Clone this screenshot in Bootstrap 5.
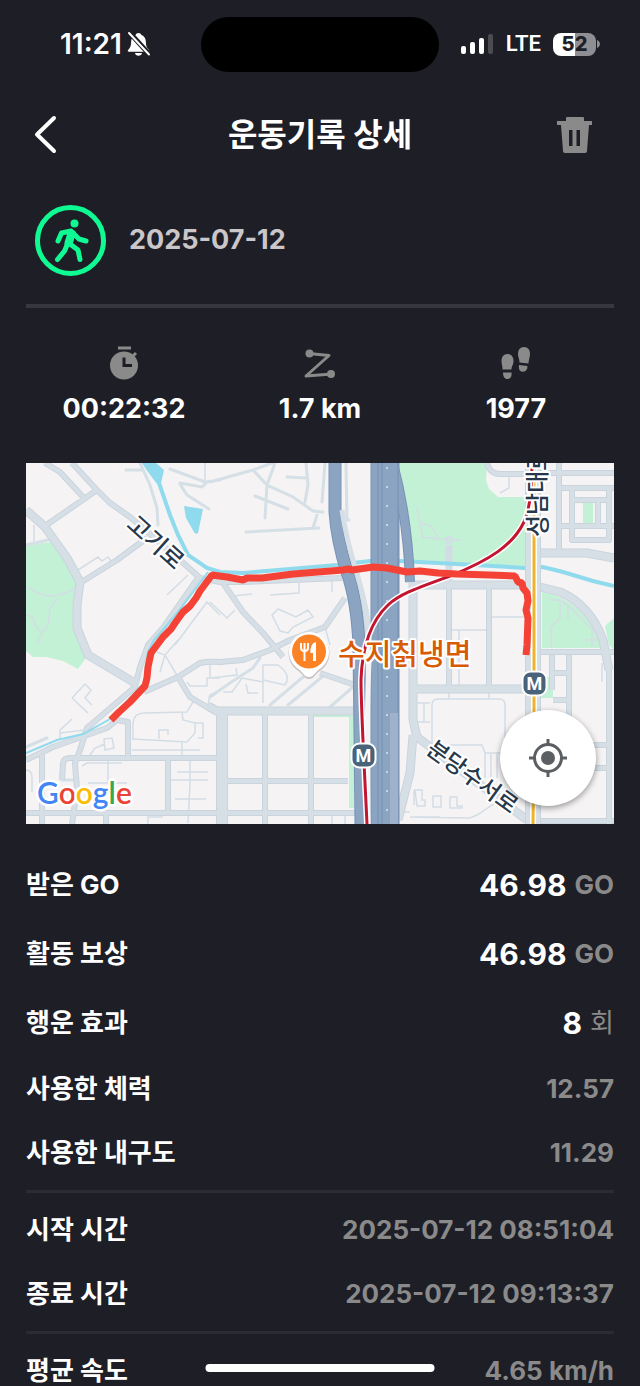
<!DOCTYPE html>
<html lang="ko">
<head>
<meta charset="utf-8">
<meta name="viewport" content="width=device-width, initial-scale=1">
<title>운동기록 상세</title>
<link href="https://cdn.jsdelivr.net/npm/bootstrap@5.3.0/dist/css/bootstrap.min.css" rel="stylesheet">
<style>
  :root { --ink: #1e1e26; --dim: #8a8a8a; --rule: #2b2b34; --side: 26px; }
  body { background: var(--ink); color: #fff; font-family: Inter, "Noto Sans CJK KR", sans-serif; font-weight: 700; }
  .statusbar { height: 88px; padding: 0 40px; }
  .island { width: 238px; height: 55px; border-radius: 28px; background: #000; }
  .clock { font-size: 28px; line-height: 32px; margin-left: 20px; font-weight: 600; }
  .network { font-family: Roboto, sans-serif; font-size: 22px; line-height: 32px; font-weight: 600; }
  .battery { width: 43px; height: 23px; border-radius: 8px; background: linear-gradient(90deg, #fff 52%, #8e8e93 52%); color: var(--ink); font-size: 20px; line-height: 23px; font-weight: 800; }
  .topbar { height: 94px; padding: 0 var(--side); }
  .topbar h1 { font-size: 32px; line-height: 44px; font-weight: 700; }
  .icon-btn { width: 40px; height: 44px; margin-right: 20px; }
  .content { padding: 0 var(--side); }
  .summary { height: 122px; padding: 0 9px 6px; gap: 23px; }
  .summary time { color: #cbc7c9; font-size: 27px; line-height: 36px; }
  .rule-line { height: 3px; margin: 5px 0; border: 0; opacity: 1; background: var(--rule); }
  .rule-top { height: 4px; margin: 0; background: #373740; }
  .stats { padding: 36px 0 36px; }
  .stats svg { color: var(--dim); height: 40px; }
  .stats .figure-text { font-size: 27px; line-height: 36px; margin-top: 7px; }
  .locate { right: 18px; bottom: 18px; width: 96px; height: 96px; background: #fff; color: #5b5f63; box-shadow: 0 2px 6px rgba(0,0,0,.4); }
  .details { margin: 26px 0 0; font-size: 26px; line-height: 36px; }
  .details .line { height: 64px; }
  .details .line-lg { height: 69px; }
  .details dt, .details dd { margin: 0; font-weight: 700; }
  .details dd { color: var(--dim); }
  .details dd.amount { gap: 8px; }
  .details dd strong { color: #fff; font-size: 30px; font-weight: 700; }
  .home-bar { bottom: 14px; width: 229px; height: 8px; border-radius: 4px; background: #fff; }
  .map-label { font-family: "Noto Sans CJK KR", sans-serif; font-weight: 500; fill: #26384a; stroke: #fff; stroke-width: 4px; stroke-linejoin: round; paint-order: stroke; }
  .map-place { fill: #d75b05; }
  .map-logo { font-family: Lato, sans-serif; font-size: 30px; font-weight: 600; stroke: #fff; stroke-width: 5px; stroke-linejoin: round; paint-order: stroke; }
  .map-metro { font-family: Roboto, sans-serif; font-size: 18px; font-weight: 700; fill: #fff; }
</style>
</head>
<body>
<div class="vh-100 overflow-hidden d-flex flex-column position-relative">

  <div class="statusbar d-flex align-items-center flex-shrink-0">
    <div class="d-flex align-items-center gap-1 flex-fill w-25">
      <span class="clock">11:21</span>
      <svg width="25" height="26" viewBox="0 0 25 26" aria-hidden="true">
        <path fill="#fff" d="M12.500 2c1.500 0 2.400.8 2.700 1.700 3.300 1.200 4.700 4 4.700 7.600 0 4 1.200 5.800 3 7.600.6.700.3 1.800-.8 1.800H2.900c-1.100 0-1.400-1.100-.8-1.800 1.800-1.800 3-3.600 3-7.600 0-3.600 1.400-6.400 4.700-7.600.3-.9 1.200-1.700 2.700-1.700zM9 22h7c-.3 1.700-1.700 2.800-3.500 2.800S9.300 23.700 9 22z"/>
        <path d="M3.500 1.500l20 22" stroke="#1e1e26" stroke-width="5"/>
        <path d="M3 2l20 21.500" stroke="#fff" stroke-width="2" stroke-linecap="round"/>
      </svg>
    </div>
    <div class="island flex-shrink-0"></div>
    <div class="d-flex align-items-center justify-content-end flex-fill w-25">
      <svg class="me-2 flex-shrink-0" width="34" height="20" viewBox="0 0 34 20" aria-hidden="true">
        <g fill="#fff"><rect x="1" y="12" width="5" height="8" rx="2"/><rect x="10" y="8" width="5" height="12" rx="2"/><rect x="19" y="4" width="5" height="16" rx="2"/></g>
        <rect x="28" y="0" width="5" height="20" rx="2" fill="#4b4b50"/>
      </svg>
      <span class="network me-2 ms-1">LTE</span>
      <span class="battery text-center flex-shrink-0 ms-1">52</span>
      <svg class="flex-shrink-0" width="4" height="8" viewBox="0 0 4 8" aria-hidden="true"><path d="M1 0c4 2 4 6 0 8z" fill="#8e8e93"/></svg>
    </div>
  </div>

  <header class="topbar d-flex align-items-center justify-content-between flex-shrink-0">
    <button type="button" class="icon-btn btn p-0 border-0" aria-label="뒤로">
      <svg class="d-block" width="40" height="44" viewBox="0 0 40 44"><path d="M28 5L11 21.500 28 38" fill="none" stroke="#fff" stroke-width="4" stroke-linecap="round" stroke-linejoin="round"/></svg>
    </button>
    <h1 class="m-0">운동기록 상세</h1>
    <button type="button" class="icon-btn btn p-0 border-0" aria-label="삭제">
      <svg class="d-block" width="40" height="44" viewBox="0 0 40 44"><path fill="#8a8a8a" fill-rule="evenodd" d="M12 5q0-1 1-1h16q1 0 1 1v3h8v4h-3L33 38q0 2-2 2H11q-2 0-2-2L7 12H3V8h9zM15 17v16h3.500V17zM22.500 17v16H26V17z"/></svg>
    </button>
  </header>

  <main class="content flex-shrink-0">
    <div class="summary d-flex align-items-center">
      <svg width="71" height="71" viewBox="0 0 71 71" role="img" aria-label="걷기">
        <circle cx="35.500" cy="35.500" r="33" fill="none" stroke="#0ffa92" stroke-width="5"/>
        <circle cx="39.500" cy="18.500" r="4" fill="#0ffa92"/>
        <g fill="none" stroke="#0ffa92" stroke-linecap="round" stroke-linejoin="round">
          <path stroke-width="5" d="M23 36L26.500 28L36 26M39 29L44 34L51 36"/>
          <path stroke-width="8" d="M36.500 28.500L33.500 38"/>
          <path stroke-width="5" d="M38 28L35 39L43 45L45 54.500M32.500 39L29.500 46L22.500 54.500"/>
        </g>
      </svg>
      <time datetime="2025-07-12">2025-07-12</time>
    </div>
    <hr class="rule-line rule-top">

    <div class="stats row g-0 text-center">
      <div class="col">
        <svg width="40" height="40" viewBox="0 0 40 40" aria-hidden="true"><circle cx="20" cy="21.500" r="14" fill="currentColor"/><path d="M14 4h13M29 12l3-3" stroke="currentColor" stroke-width="3"/><path d="M20 13.500v8h8" fill="none" stroke="#1e1e26" stroke-width="3"/></svg>
        <div class="figure-text">00:22:32</div>
      </div>
      <div class="col">
        <svg width="40" height="40" viewBox="0 0 40 40" aria-hidden="true"><path d="M9 9.500l20 2L6 32l26-2" fill="none" stroke="currentColor" stroke-width="3" stroke-linejoin="round"/><circle cx="9.500" cy="9.500" r="4" fill="currentColor"/><circle cx="31" cy="30" r="4" fill="currentColor"/></svg>
        <div class="figure-text">1.7 km</div>
      </div>
      <div class="col">
        <svg width="40" height="40" viewBox="0 0 40 40" aria-hidden="true"><g fill="currentColor"><path d="M6.500 25.500c0-4-1-5-1-8.500 0-4 2-7 6-7s6 3 6 7c0 4-2 5-2 8.500zM7 28.500h8.500c.5 4-1 6.500-4 6.500s-4.500-2.500-4.500-6.500z"/><path d="M23.500 18.500c0-4-1.500-5-1.500-8.500 0-4 2-7 6-7s6 3 6 7c0 4-1.500 5.500-1.500 9.500zM23 21l8.500 1c0 4-2 6-5 5.700S22.500 25 23 21z"/></g></svg>
        <div class="figure-text">1977</div>
      </div>
    </div>

    <div class="position-relative">
      <svg class="w-100 d-block" viewBox="26 463 588 361" role="img" aria-label="운동 경로 지도">
        <defs>
          <g id="streets" fill="none" stroke-linejoin="round">
            <path d="M45 463L60 472 83 497M97 490L45 526M72 463L97 490 110 503 130 517 180 560 200 578 220 582 243 582 342 578M80 583L117 560 147 538M198 578L163 628 148 645 140 667 135 687 87 728 80 750 75 763 77 790 72 824M26 760L53 747 87 735 107 728 117 720 128 722V757M62 780L63 763Q64 758 70 758H217M144 692L178 677 200 663Q208 661 220 662L243 660 270 650 290 640 325 627 345 598M223 583L243 612 263 633 283 657M320 673L355 685M178 677L190 697 217 713M26 813H356M42 755V824M168 758V813M265 713V824M311 713V824M227 781H348M449 588V689M489 588V689M559 463V550M540 473H614M560 488H614M572 488V540H609V488M572 500H609M560 526H614M598 500V526M487 463Q490 474 500 474H525M540 652H614M550 673H569M552 655V690M569 655V740M553 700H569M609 667V824M590 745H609M590 768H609M540 821H614M106 813V824"/>
          </g>
          <g id="avenues" fill="none" stroke-linejoin="round">
            <path d="M26 510L45 527 67 558 80 582 77 605V628L88 655 135 683M208 706L217 711H357M413 582V720L417 737 437 752 527 820M410 585H525M412 689H525M540 587L560 592Q590 605 603 640L609 670M540 553H587L614 558M413 735L410 773 398 820"/>
          </g>
        </defs>
        <rect x="26" y="463" width="588" height="361" fill="#f5f3f4"/>
        <g fill="#c3f1d5">
          <path d="M26 545L52 542 80 584 75 600V632L88 655 78 669 63 661 47 657H33L26 651zM399 463H487L486 480 489 489 498 497H525V567L413 560zM583 503H593V524H583zM542 592Q585 600 603 648H542zM605 626L614 618V650L609 645zM541 677H553V698H541zM312 713H354V808H349V717H312z"/>
        </g>
        <!-- lanes and building outlines -->
        <path fill="none" stroke="#d3dde5" stroke-width="1.500" d="M78 570L98 557 102 561 108 557 111 561M167 595L188 575M175 645L207 602 220 615M27 587L40 594Q55 600 75 588M58 598L50 608 48 625 42 633 37 645M27 615L33 617 35 625 42 633M34 525V545M72 698L85 684 91 690 85 698 92 705M72 698L88 713M60 740V730L72 719M60 733L85 730M133 740V723Q134 713 144 713L187 712 193 702M132 739L187 742 195 733V723L183 720 182 712M195 723H203V738H198M132 750H200M182 742V757M159 739V730H168V735M104 739L112 738 114 748 105 750zM90 755L95 748 105 744M82 766L87 763H122M88 783H127M108 760V783M177 772H208M170 780H208M175 799H206M190 760V783L188 823M148 824V817H163M160 672L165 655 178 640M157 652L165 655 178 677M187 682L190 686H207V678H220M210 663V678M208 705L210 695 220 690M263 703V665H278Q292 675 285 685L263 680M223 692H232L242 678 263 682M246 684L248 693H258M236 668L237 675 210 678M233 596L252 594M270 595L299 593V583M332 580V592M272 615L278 609 296 617 308 610 313 617 293 627 288 633 280 631zM280 645L325 627 330 645M210 602L227 618 235 610M205 463V480M509 476V488L500 493M417 507L423 537 447 540H461M422 523L432 527 438 538M452 630H487M459 630V687M492 617H525M417 703H430M417 722H430M424 703V722M432 745V705Q432 699 438 699H499Q505 699 505 705V740M450 745H482L485 753H503M485 753V778M491 753V778M497 753V778M449 690V699M489 690V699M410 817L470 818 477 815 510 793M415 790H422V800H425V806H417zM433 796H441V807H433zM450 797H457V806H462V808H450zM550 600H560L568 605V620M560 603V618L551 627V648M568 605L592 630V647M586 640H598M602 663V682M415 817H440M398 812H410M414 790V805M332 812V824M345 812V824M26 770Q32 770 32 778V792"/>
        <path fill="none" stroke="#d5dfe6" stroke-width="3" stroke-linecap="round" d="M140 463L150 485 157 508 158 525M26 545L52 539M126 470H142M170 469L205 482 220 480M180 483L202 487 207 482M180 484L187 495 209 509M210 482L253 470 272 463M253 470L267 485 293 497 313 511 323 512M275 463L267 485 265 518M255 496L288 509M287 477L307 478M306 463L308 485 305 502M325 463L322 502M246 532L319 528M317 515L313 528M346 463L347 520M340 520H349M210 697L230 683 253 668 260 658M270 705L303 677M288 705L322 677M330 707L353 687M26 747L47 738M62 780H77"/>
        <circle cx="449" cy="540" r="3" fill="none" stroke="#d3dde5" stroke-width="2"/>
        <use href="#streets" stroke="#cad4dd" stroke-width="6"/>
        <use href="#avenues" stroke="#cad4dd" stroke-width="9"/>
        <path d="M449 545V585" stroke="#d2dce4" stroke-width="7"/>
        <path d="M222 712V824" stroke="#cad4dd" stroke-width="12"/>
        <path d="M222 712V824" stroke="#d6dfe6" stroke-width="10"/>
        <use href="#streets" stroke="#d6dfe6" stroke-width="4"/>
        <use href="#avenues" stroke="#d6dfe6" stroke-width="7"/>
        <!-- streams and ponds -->
        <g fill="#8fdaec"><path d="M142 463L148 472 157 484 161 483 164 470 156 463zM184 506L203 509 198 533Q196 535 194 532L186 518z"/></g>
        <path fill="none" stroke="#8fdaec" stroke-width="4" d="M158 480L170 515 178 535 188 555 207 568 220 572 243 573 337 565 370 561 400 561 457 564 525 568 543 567 563 572 593 581 614 586"/>
        <path fill="none" stroke="#8fdaec" stroke-width="2" d="M208 572L178 612 154 640 148 652 144 683 110 719 83 734 57 740 26 753"/>
        <!-- expressways -->
        <path d="M338 510Q342 538 355 575T368 645" fill="none" stroke="#d2dce4" stroke-width="8"/>
        <g fill="none" stroke="#7893b5">
          <path stroke-width="13" d="M335 463V512Q337 540 347 572Q357 600 359 645L361 824"/>
          <path stroke-width="29" d="M385 463V824"/>
          <path stroke-width="10" d="M393 463Q408 520 410 582"/>
        </g>
        <g fill="none" stroke="#8ba4c1">
          <path stroke-width="11" d="M335 463V512Q337 540 347 572Q357 600 359 645L361 824"/>
          <path stroke-width="27" d="M385 463V824"/>
          <path stroke-width="8" d="M393 463Q408 520 410 582"/>
        </g>
        <path d="M342 510Q346 538 356 570T370 645" fill="none" stroke="#d6dfe6" stroke-width="5"/>
        <path d="M378 463V824M382 463V824M398 463V824" stroke="#7691b4"/>
        <path d="M394 713V824" stroke="#a0b2cb" stroke-width="8"/>
        <path d="M387 467V824" stroke="#dbe4ee" stroke-width="1.500" stroke-dasharray="2 17"/>
        <path d="M370 650Q366 690 368 824" fill="none" stroke="#f5f3f4" stroke-width="5"/>
        <!-- trunk road -->
        <path d="M533 463V824" stroke="#cad4dd" stroke-width="16"/>
        <path d="M533 463V824" stroke="#d6dfe6" stroke-width="14"/>
        <path d="M534 463V740L533 824" fill="none" stroke="#fff" stroke-width="6"/>
        <path d="M534 463V740L533 824" fill="none" stroke="#f0b32c" stroke-width="3"/>
        <!-- metro line -->
        <g fill="none">
          <path stroke="#fff" stroke-width="6" d="M532 463Q532 505 524 522C513 545 490 560 450 576C415 589 400 594 388 605C370 622 362 650 361 680C361 710 365 780 367 824"/>
          <path stroke="#c3152f" stroke-width="3" d="M532 463Q532 505 524 522C513 545 490 560 450 576C415 589 400 594 388 605C370 622 362 650 361 680C361 710 365 780 367 824"/>
        </g>
        <!-- recorded route -->
        <path fill="none" stroke="#f44336" stroke-width="7" stroke-linejoin="bevel" d="M111 720L119 712 130 702 145 686 147 678 148 667 151 653 157 645 163 637 171 629 175 623 183 612 190 606 196 598 200 591 212 575 227 577 243 580 247 578 262 578 293 574 318 572 343 570 348 569 352 570 373 567 387 568 407 572 420 571 438 573 457 574 490 575 515 576 518 582 522 583 523 588 527 593 528 601 526 610 528 618 527 645 526 655"/>
        <!-- stations -->
        <g stroke="#fff" stroke-width="2" fill="#48637a">
          <rect x="351.500" y="743.500" width="24" height="24" rx="8"/>
          <rect x="522.500" y="671.500" width="24" height="24" rx="8"/>
        </g>
        <g class="map-metro" text-anchor="middle"><text x="363.500" y="762">M</text><text x="534.500" y="690">M</text></g>
        <!-- place pin -->
        <path d="M309 679C304 679 303 674 297 670A20.500 20.500 0 1 1 321 670C315 674 314 679 309 679z" fill="#a9a3a3" opacity=".6"/>
        <path d="M309 677C304 677 303 672 297 668A20 20 0 1 1 321 668C315 672 314 677 309 677z" fill="#fff"/>
        <circle cx="309" cy="651.500" r="17" fill="#fb8326"/>
        <path fill="none" stroke="#fff" stroke-width="2" d="M301 643V648Q301 651 304.500 651T308 648V643M304.500 643V661"/>
        <path fill="#fff" d="M316 642V661H313V653H310.500Q310 643 316 642z"/>
        <!-- labels -->
        <text class="map-label" font-size="24" text-anchor="middle" transform="translate(156 542) rotate(42)" y="9">고기로</text>
        <text class="map-label" font-size="23" text-anchor="middle" transform="translate(473 776) rotate(36)" y="9">분당수서로</text>
        <text class="map-label" font-size="24" transform="translate(537 537) rotate(-90)" y="9">성남대로</text>
        <text class="map-label map-place" font-size="29" x="338" y="665">수지칡냉면</text>
        <text class="map-logo" x="37" y="804"><tspan fill="#4285f4">G</tspan><tspan fill="#ea4335">o</tspan><tspan fill="#fbbc04">o</tspan><tspan fill="#4285f4">g</tspan><tspan fill="#34a853">l</tspan><tspan fill="#ea4335">e</tspan></text>
      </svg>
      <button type="button" class="locate btn border-0 rounded-circle position-absolute p-0 d-flex align-items-center justify-content-center" aria-label="현재 위치">
        <svg width="38" height="38" viewBox="0 0 38 38"><circle cx="19" cy="19" r="7" fill="currentColor"/><circle cx="19" cy="19" r="13.500" fill="none" stroke="currentColor" stroke-width="3"/><path d="M19 0v6M19 32v6M0 19h6M32 19h6" stroke="currentColor" stroke-width="3"/></svg>
      </button>
    </div>

    <dl class="details">
      <div class="line line-lg d-flex align-items-center justify-content-between"><dt>받은 GO</dt><dd class="amount d-flex align-items-center"><strong>46.98</strong><span>GO</span></dd></div>
      <div class="line line-lg d-flex align-items-center justify-content-between"><dt>활동 보상</dt><dd class="amount d-flex align-items-center"><strong>46.98</strong><span>GO</span></dd></div>
      <div class="line line-lg d-flex align-items-center justify-content-between"><dt>행운 효과</dt><dd class="amount d-flex align-items-center"><strong>8</strong><span class="fw-normal">회</span></dd></div>
      <div class="line d-flex align-items-center justify-content-between"><dt>사용한 체력</dt><dd>12.57</dd></div>
      <div class="line d-flex align-items-center justify-content-between"><dt>사용한 내구도</dt><dd>11.29</dd></div>
    </dl>
    <hr class="rule-line">
    <dl class="details mt-0">
      <div class="line d-flex align-items-center justify-content-between"><dt>시작 시간</dt><dd>2025-07-12 08:51:04</dd></div>
      <div class="line d-flex align-items-center justify-content-between"><dt>종료 시간</dt><dd>2025-07-12 09:13:37</dd></div>
    </dl>
    <hr class="rule-line">
    <dl class="details mt-0">
      <div class="line d-flex align-items-center justify-content-between"><dt>평균 속도</dt><dd>4.65 km/h</dd></div>
    </dl>
  </main>

  <div class="home-bar position-absolute start-50 translate-middle-x"></div>
</div>
<script src="https://cdn.jsdelivr.net/npm/bootstrap@5.3.0/dist/js/bootstrap.bundle.min.js"></script>
</body>
</html>
